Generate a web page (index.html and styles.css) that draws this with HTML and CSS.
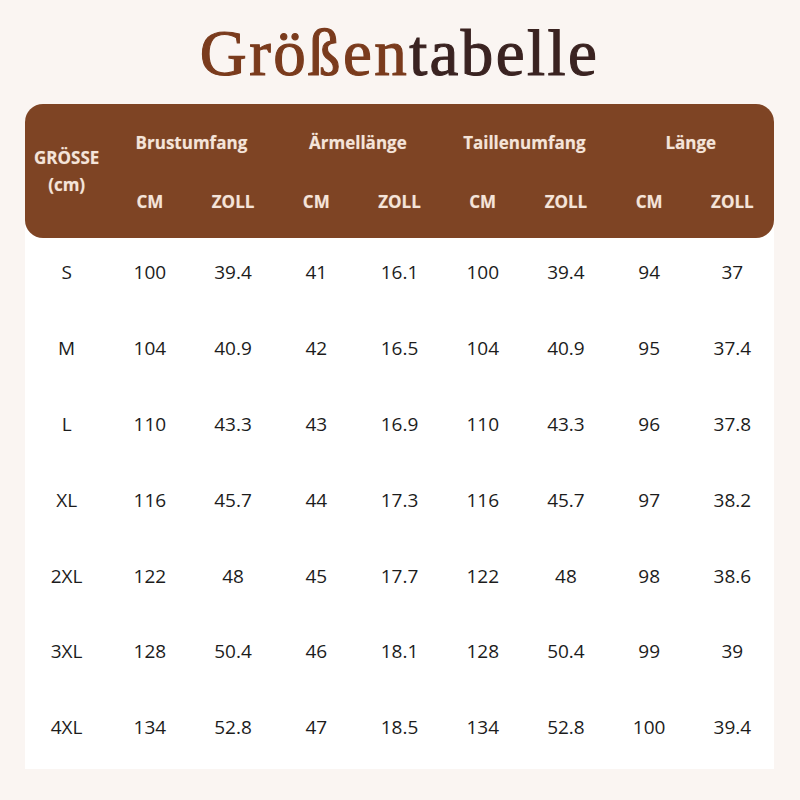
FILE: index.html
```html
<!DOCTYPE html>
<html lang="de">
<head>
<meta charset="utf-8">
<title>Größentabelle</title>
<link rel="stylesheet" href="styles.css">
</head>
<body>
<div class="page">
  <h1 class="title"><span class="title-a">Größen</span><span class="title-b">tabelle</span></h1>
  <div class="card">
    <div class="head">
      <div class="size-h">GRÖSSE<br>(cm)</div>
      <div class="group g1">Brustumfang</div>
      <div class="group g2">Ärmellänge</div>
      <div class="group g3">Taillenumfang</div>
      <div class="group g4">Länge</div>
      <div class="unit">CM</div><div class="unit">ZOLL</div>
      <div class="unit">CM</div><div class="unit">ZOLL</div>
      <div class="unit">CM</div><div class="unit">ZOLL</div>
      <div class="unit">CM</div><div class="unit">ZOLL</div>
    </div>
    <div class="body">
      <div class="c">S</div><div class="c">100</div><div class="c">39.4</div><div class="c">41</div><div class="c">16.1</div><div class="c">100</div><div class="c">39.4</div><div class="c">94</div><div class="c">37</div>
      <div class="c">M</div><div class="c">104</div><div class="c">40.9</div><div class="c">42</div><div class="c">16.5</div><div class="c">104</div><div class="c">40.9</div><div class="c">95</div><div class="c">37.4</div>
      <div class="c">L</div><div class="c">110</div><div class="c">43.3</div><div class="c">43</div><div class="c">16.9</div><div class="c">110</div><div class="c">43.3</div><div class="c">96</div><div class="c">37.8</div>
      <div class="c">XL</div><div class="c">116</div><div class="c">45.7</div><div class="c">44</div><div class="c">17.3</div><div class="c">116</div><div class="c">45.7</div><div class="c">97</div><div class="c">38.2</div>
      <div class="c">2XL</div><div class="c">122</div><div class="c">48</div><div class="c">45</div><div class="c">17.7</div><div class="c">122</div><div class="c">48</div><div class="c">98</div><div class="c">38.6</div>
      <div class="c">3XL</div><div class="c">128</div><div class="c">50.4</div><div class="c">46</div><div class="c">18.1</div><div class="c">128</div><div class="c">50.4</div><div class="c">99</div><div class="c">39</div>
      <div class="c">4XL</div><div class="c">134</div><div class="c">52.8</div><div class="c">47</div><div class="c">18.5</div><div class="c">134</div><div class="c">52.8</div><div class="c">100</div><div class="c">39.4</div>
    </div>
  </div>
</div>
</body>
</html>
```

FILE: styles.css
```css
html, body {
  margin: 0;
  padding: 0;
  background: #faf5f2;
}

.page {
  width: 800px;
  height: 800px;
  padding: 21px 26px 0 25px;
  box-sizing: border-box;
}

.title {
  margin: 0;
  height: 65px;
  font-family: "Liberation Serif", "Times New Roman", serif;
  font-weight: normal;
  font-size: 65px;
  line-height: 65px;
  letter-spacing: 2.4px;
  text-align: center;
  -webkit-text-stroke: 1.1px currentColor;
}

.title-a {
  color: #7a3b1d;
}

.title-b {
  color: #3a2321;
}

.card {
  margin-top: 18px;
  background: #ffffff;
  border-radius: 18px 18px 0 0;
  font-family: "Open Sans", "Noto Sans", sans-serif;
}

.head {
  display: grid;
  grid-template-columns: repeat(9, 1fr);
  grid-template-rows: 76px 42px 16px;
  background: #7e4424;
  border-radius: 18px;
  color: #f4e4d9;
  font-weight: bold;
  font-size: 17px;
  text-shadow: 0 0 1px rgba(255, 240, 230, 0.35);
}

.size-h {
  grid-column: 1;
  grid-row: 1 / 4;
  align-self: center;
  text-align: center;
  line-height: 27px;
}

.group {
  grid-row: 1;
  grid-column: span 2;
  display: flex;
  align-items: center;
  justify-content: center;
}

.unit {
  grid-row: 2;
  display: flex;
  align-items: center;
  justify-content: center;
}

.body {
  display: grid;
  grid-template-columns: repeat(9, 1fr);
  grid-auto-rows: 75.8px;
  color: #1c1c1c;
  font-size: 19px;
}

.c {
  display: flex;
  align-items: center;
  justify-content: center;
  padding-bottom: 7px;
}
```
